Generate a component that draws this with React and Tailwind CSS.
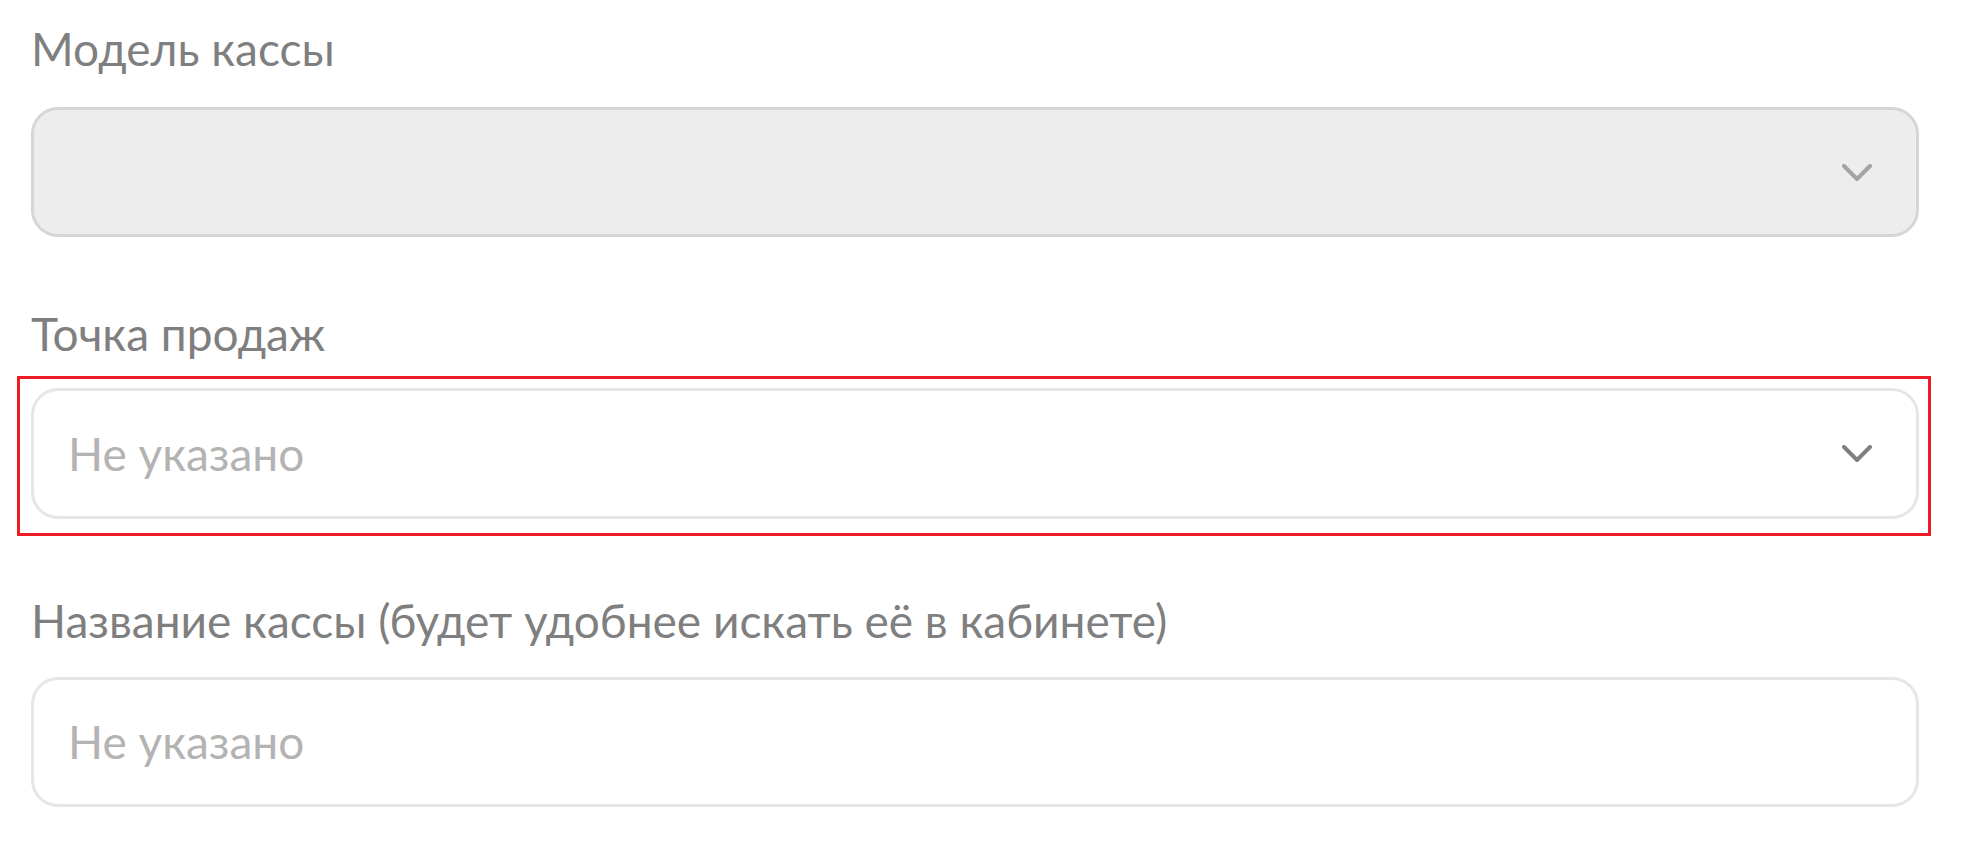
import React from "react";

function Chevron({ color }) {
  return (
    <svg width="30" height="17" viewBox="0 0 30 17" fill="none">
      <polyline points="2,2 15,15 28,2" stroke={color} strokeWidth="4" strokeLinecap="round" strokeLinejoin="round" />
    </svg>
  );
}

export default function App() {
  return (
    <div className="w-[1968px] h-[862px] bg-white font-['Lato',sans-serif] pl-[31px] pr-[49px] pt-[23px] overflow-hidden">
      <div className="text-[46px] leading-[52px] text-[#7f7f7f]">Модель кассы</div>
      <div className="mt-[32px] h-[130px] rounded-[27px] border-[3px] border-[#d6d6d6] bg-[#ededed] flex items-center justify-end pr-[44px]">
        <Chevron color="#a3a3a3" />
      </div>

      <div className="mt-[71px] text-[46px] leading-[52px] text-[#7f7f7f]">Точка продаж</div>
      <div className="mt-[16px] -ml-[14px] -mr-[12px] border-[3px] border-[#ee1c25] pl-[11px] pr-[9px] pt-[9px] pb-[14px]">
        <div className="h-[131px] rounded-[27px] border-[3px] border-[#e6e6e6] bg-white flex items-center justify-between pl-[34px] pr-[44px]">
          <span className="text-[46px] leading-none text-[#b3b3b3]">Не указано</span>
          <Chevron color="#7f7f7f" />
        </div>
      </div>

      <div className="mt-[59px] text-[46px] leading-[52px] text-[#7f7f7f]">Название кассы (будет удобнее искать её в кабинете)</div>
      <div className="mt-[30px] h-[130px] rounded-[27px] border-[3px] border-[#e6e6e6] bg-white flex items-center pl-[34px]">
        <span className="text-[46px] leading-none text-[#b3b3b3]">Не указано</span>
      </div>
    </div>
  );
}
